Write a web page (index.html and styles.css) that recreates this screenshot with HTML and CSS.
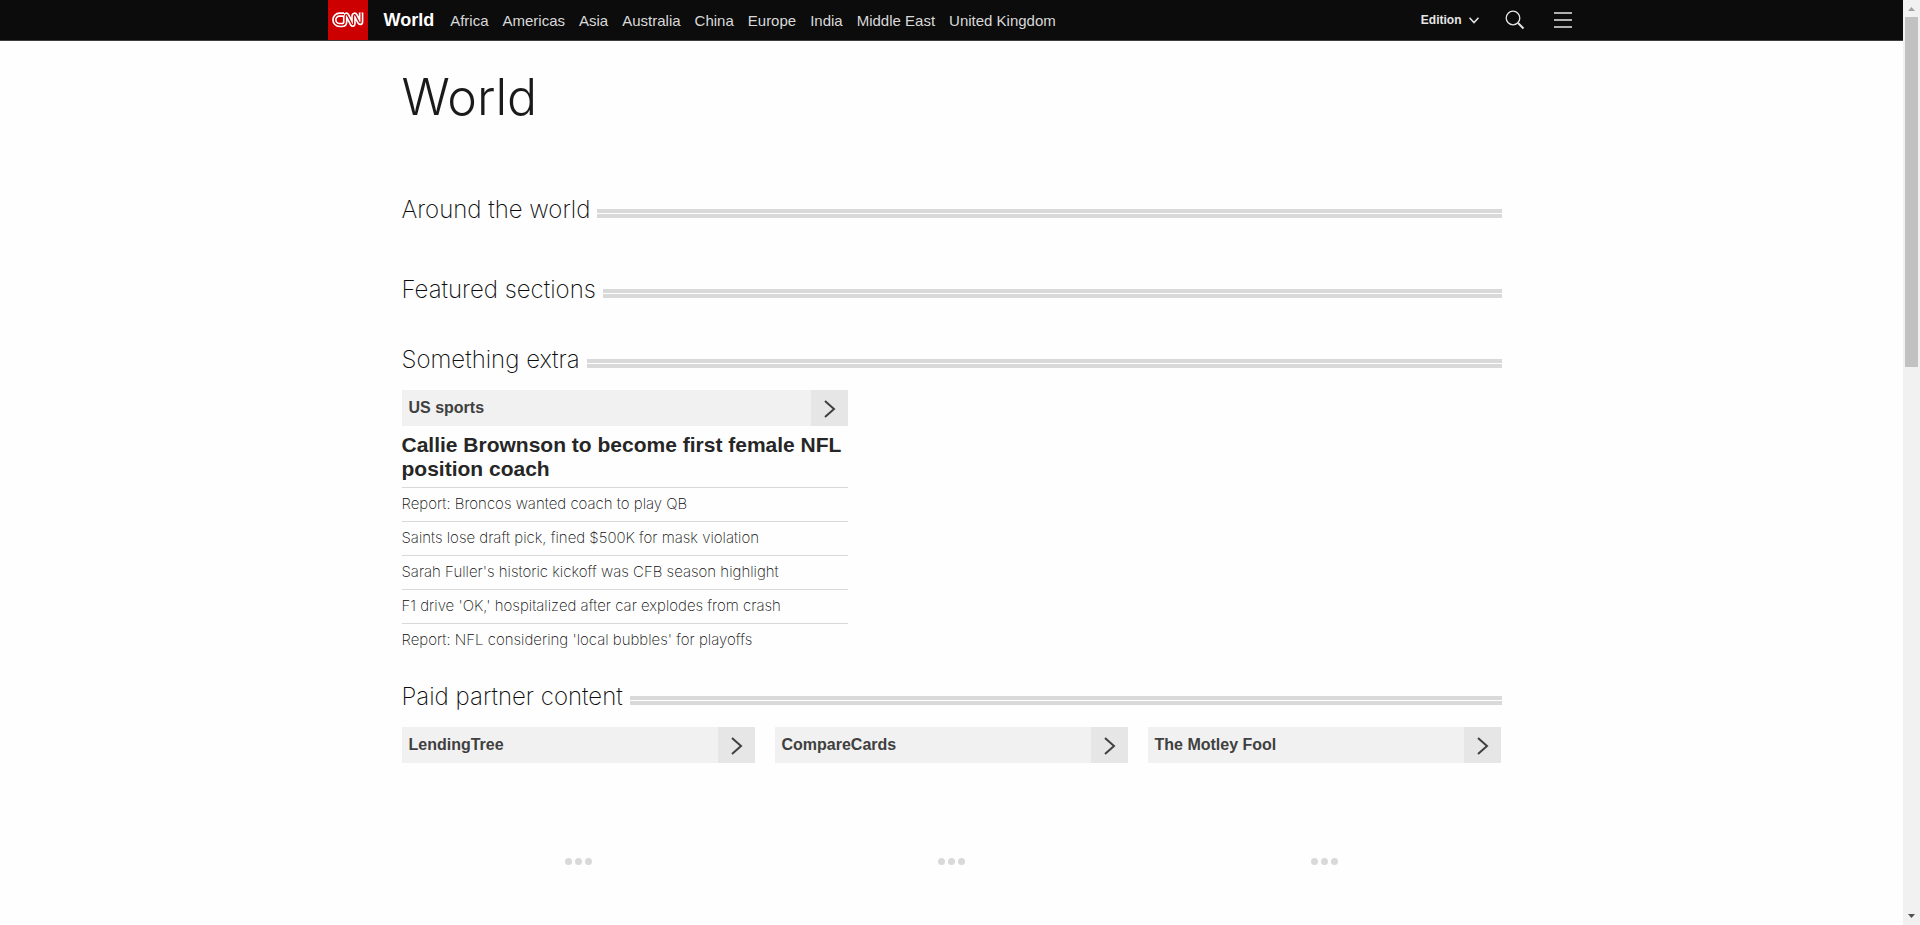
FILE: index.html
```html
<!DOCTYPE html>
<html lang="en">
<head>
<meta charset="utf-8">
<title>World - CNN</title>
<link rel="stylesheet" href="styles.css">
</head>
<body>
<div class="page">
  <header class="topbar">
    <div class="topbar-inner">
      <a class="logo" href="#" aria-label="CNN">
        <svg viewBox="0 0 40 40" fill="none" stroke-linejoin="round">
          <path stroke="#fff" stroke-width="4.600" d="M16 14.600h-4.400a5.200 5.200 0 0 0 0 10.400h2.200c2.400 0 3.400-1.200 3.400-3v-5.800c0-2 1.500-1.900 2.200-.7l4.400 8.500c.7 1.200 1.700 1 1.700-.4v-7.400c0-2 1.500-1.900 2.200-.7l3.400 6.500c.8 1.400 2 1.200 2-.3v-9.200"/>
          <path stroke="#c00" stroke-width="1.300" d="M16 14.600h-4.400a5.200 5.200 0 0 0 0 10.400h2.200c2.400 0 3.400-1.200 3.400-3v-5.800c0-2 1.500-1.900 2.200-.7l4.400 8.500c.7 1.200 1.700 1 1.700-.4v-7.400c0-2 1.500-1.900 2.200-.7l3.400 6.500c.8 1.400 2 1.200 2-.3v-9.200"/>
        </svg>
      </a>
      <a class="section-name" href="#">World</a>
      <nav class="nav">
        <a href="#">Africa</a><a href="#">Americas</a><a href="#">Asia</a><a href="#">Australia</a><a href="#">China</a><a href="#">Europe</a><a href="#">India</a><a href="#">Middle East</a><a href="#">United Kingdom</a>
      </nav>
      <div class="tools">
        <button class="edition" type="button">Edition
          <svg width="10" height="7" viewBox="0 0 10 7" fill="none" stroke="#e6e6e6" stroke-width="1.500"><path d="M.5.800 5 5.600 9.500.800"/></svg>
        </button>
        <button class="icon-button" type="button" aria-label="Search">
          <svg width="20" height="20" viewBox="0 0 20 20" fill="none" stroke="#e6e6e6"><circle cx="8" cy="8" r="6.800" stroke-width="1.300"/><path stroke-width="2" d="m13 13 5.500 5.500"/></svg>
        </button>
        <button class="icon-button" type="button" aria-label="Menu">
          <svg width="18" height="18" viewBox="0 0 18 18" stroke="#e6e6e6" stroke-width="1.500"><path d="M0 2h18M0 9h18M0 16h18"/></svg>
        </button>
      </div>
    </div>
  </header>
  <main class="content">
    <h1>World</h1>
    <section class="zone zone-tall"><h2>Around the world</h2></section>
    <section class="zone zone-short"><h2>Featured sections</h2></section>
    <section class="zone zone-extra">
      <h2>Something extra</h2>
      <div class="sports">
        <a class="card" href="#"><span class="card-name">US sports</span><span class="card-arrow"><svg width="12" height="18" viewBox="0 0 12 18"><path d="m1 1 9 8-9 8"/></svg></span></a>
        <h3><a href="#">Callie Brownson to become first female NFL position coach</a></h3>
        <ul>
          <li><a href="#">Report: Broncos wanted coach to play QB</a></li>
          <li><a href="#">Saints lose draft pick, fined $500K for mask violation</a></li>
          <li><a href="#">Sarah Fuller's historic kickoff was CFB season highlight</a></li>
          <li><a href="#">F1 drive 'OK,' hospitalized after car explodes from crash</a></li>
          <li><a href="#">Report: NFL considering 'local bubbles' for playoffs</a></li>
        </ul>
      </div>
    </section>
    <section class="zone">
      <h2>Paid partner content</h2>
      <div class="partners">
        <div class="partner">
          <a class="card" href="#"><span class="card-name">LendingTree</span><span class="card-arrow"><svg width="12" height="18" viewBox="0 0 12 18"><path d="m1 1 9 8-9 8"/></svg></span></a>
          <div class="loading"><i></i><i></i><i></i></div>
        </div>
        <div class="partner">
          <a class="card" href="#"><span class="card-name">CompareCards</span><span class="card-arrow"><svg width="12" height="18" viewBox="0 0 12 18"><path d="m1 1 9 8-9 8"/></svg></span></a>
          <div class="loading"><i></i><i></i><i></i></div>
        </div>
        <div class="partner">
          <a class="card" href="#"><span class="card-name">The Motley Fool</span><span class="card-arrow"><svg width="12" height="18" viewBox="0 0 12 18"><path d="m1 1 9 8-9 8"/></svg></span></a>
          <div class="loading"><i></i><i></i><i></i></div>
        </div>
      </div>
    </section>
  </main>
</div>
<div class="scrollbar" aria-hidden="true">
  <svg width="17" height="17" viewBox="0 0 17 17"><path fill="#a3a3a3" d="M5 11h7L8.500 7z"/></svg>
  <div class="track"><div class="thumb"></div></div>
  <svg width="17" height="17" viewBox="0 0 17 17"><path fill="#505050" d="M5 6h7L8.500 10z"/></svg>
</div>
</body>
</html>
```
FILE: styles.css
```css
*, *::after { box-sizing: border-box; }
body {
  margin: 0;
  display: flex;
  min-height: 100vh;
  background: #fefefe;
  color: #262626;
  font-family: Inter, "Liberation Sans", sans-serif;
}
a { color: inherit; text-decoration: none; }
button { border: 0; padding: 0; background: none; color: #e6e6e6; font: inherit; cursor: pointer; }
h1, h2, h3, ul { margin: 0; padding: 0; font-weight: 300; }
svg { display: block; }
.page { flex: 1; min-width: 0; }

.topbar { background: #0c0c0c; border-bottom: 1px solid #404040; font-family: "Liberation Sans", Arial, sans-serif; }
.topbar-inner {
  display: flex;
  align-items: center;
  height: 40px;
  max-width: 1248px;
  margin: 0 auto;
}
.logo { width: 40px; height: 40px; background: #c00; }
.section-name { margin-left: 16px; color: #fefefe; font-size: 18px; font-weight: 700; }
.nav { display: flex; gap: 14px; margin-left: 16px; color: #d9d9d9; font-size: 15px; }
.tools { display: flex; align-items: center; margin-left: auto; gap: 26px; padding-right: 4px; }
.edition { display: flex; align-items: center; gap: 7px; font-size: 12px; font-weight: 700; }
.icon-button + .icon-button { margin-left: 3px; }

.content { max-width: 1100px; margin: 0 auto; }
h1 { padding-top: 24px; color: #1a1a1a; font-size: 50px; line-height: 64px; }
.zone h2 {
  display: flex;
  align-items: center;
  gap: 7px;
  font-size: 24px;
  line-height: 32px;
  font-weight: 200;
  color: #0c0c0c;
}
.zone h2::after {
  content: "";
  flex: 1;
  height: 9px;
  margin-top: 7px;
  border: solid #d9d9d9;
  border-width: 4px 0;
}
h1 + .zone { margin-top: 65px; }
.zone-tall { padding-bottom: 48px; }
.zone-short { padding-bottom: 38px; }
.zone-extra { padding-bottom: 24px; }
.sports { max-width: 446px; margin-top: 14px; }
.card { display: flex; height: 36px; background: #f1f1f1; color: #404040; font-size: 16px; line-height: 36px; }
.card-name { flex: 1; padding-left: 7px; font-family: "Liberation Sans", Arial, sans-serif; font-weight: 700; }
.card-arrow { display: flex; align-items: center; justify-content: center; width: 37px; padding: 1px 0 0 1px; background: #e6e6e6; }
.card-arrow path { fill: none; stroke: #404040; stroke-width: 2; }
h3 { padding: 7px 0 6px; font-family: "Liberation Sans", Arial, sans-serif; font-size: 21px; line-height: 24px; font-weight: 700; }
ul { list-style: none; }
li { border-top: 1px solid #d9d9d9; padding: 6px 0 7px; color: #0c0c0c; font-size: 15px; line-height: 20px; font-weight: 200; }
.partners { display: grid; grid-template-columns: repeat(3, 1fr); gap: 20px; margin-top: 14px; padding-right: 1px; }
.loading { display: flex; justify-content: center; gap: 3px; padding-top: 95px; }
.loading i { width: 7px; height: 7px; border-radius: 50%; background: #d9d9d9; }

.scrollbar { display: flex; flex-direction: column; position: sticky; top: 0; width: 17px; height: 100vh; background: #f1f1f1; }
.track { flex: 1; padding: 0 2px; }
.thumb { height: 39.3%; background: #c1c1c1; }
```
